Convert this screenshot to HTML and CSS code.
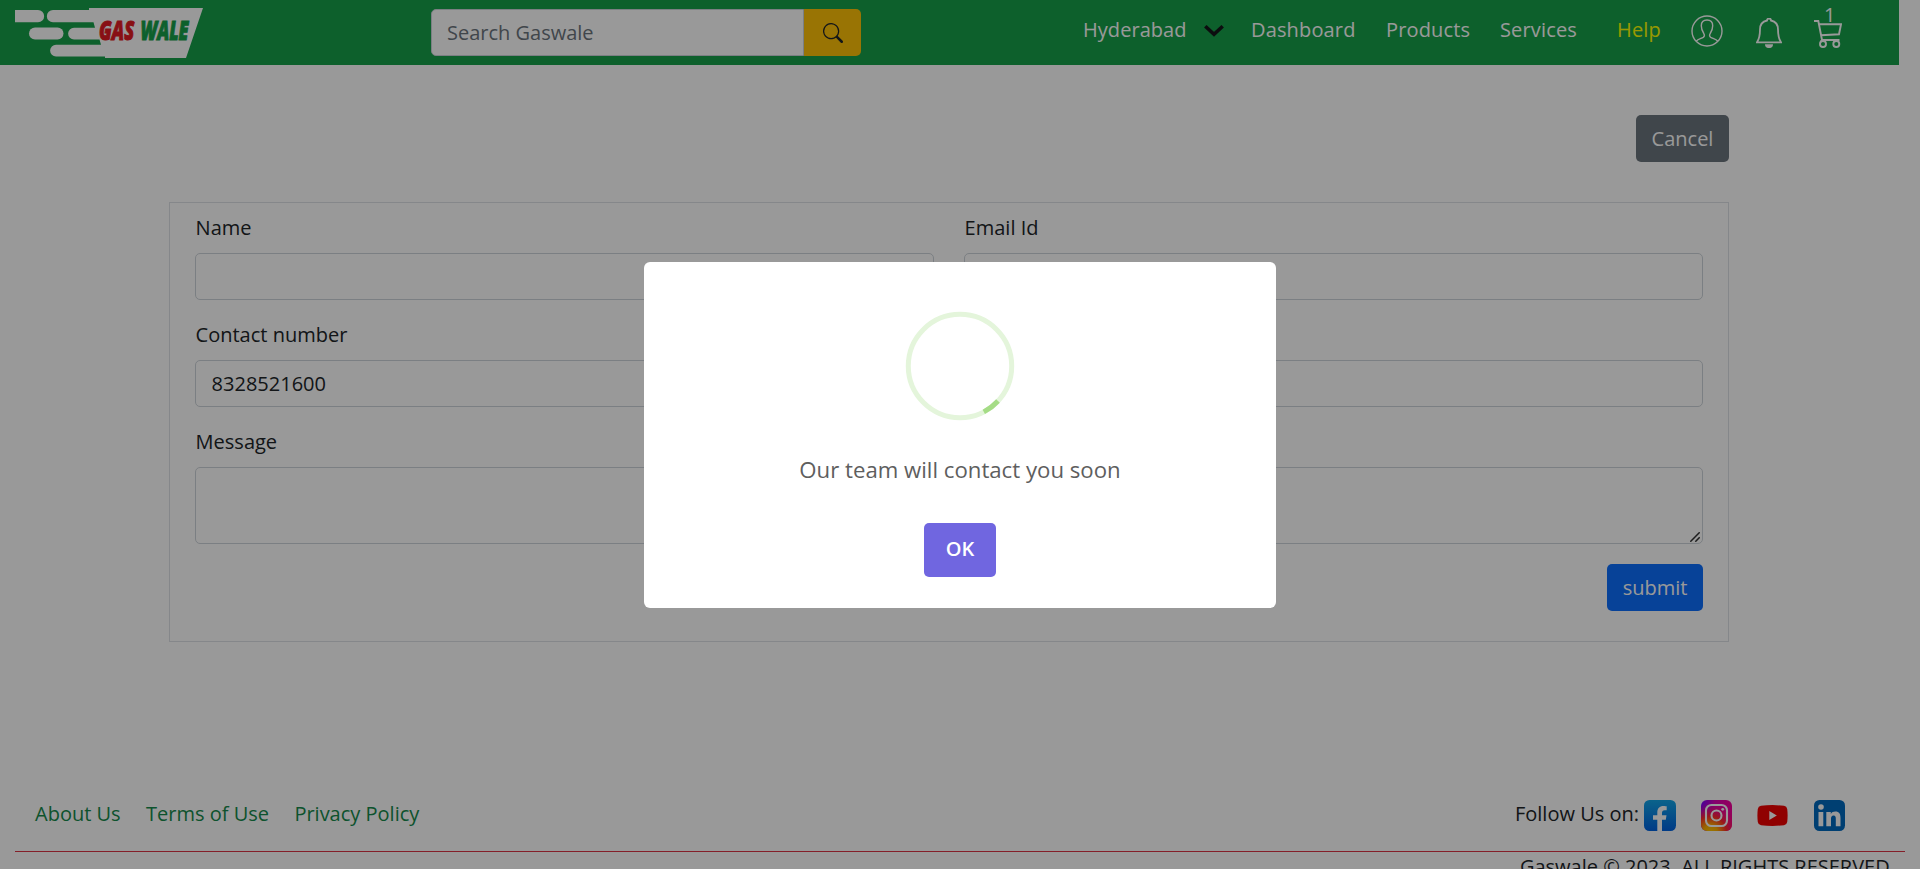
FILE: index.html
```html
<!DOCTYPE html>
<html lang="en">
<head>
<meta charset="utf-8">
<title>Gaswale</title>
<link rel="stylesheet" href="styles.css">
</head>
<body>
<header class="navbar">
  <a class="brand" href="#">
    <svg width="188" height="50" viewBox="0 0 188 50">
      <g fill="#fff">
        <path d="M0 2H23A6 6 0 0 1 23 14.3H0Z"/>
        <path d="M74 0H188L171 50H90V48.5H41A5.8 5.8 0 0 1 41 36.7H86L84.500 31.500H59A5.800 5.800 0 0 1 59 19.700H80L78.500 14.300H38A6 6 0 0 1 38 2H74Z"/>
        <rect x="14" y="19.500" width="34.500" height="12" rx="6"/>
      </g>
      <g class="brand-text">
        <text class="brand-gas" transform="translate(84 32) scale(.68 1)">GAS</text>
        <text class="brand-wale" transform="translate(125.500 32) scale(.66 1)">WALE</text>
      </g>
    </svg>
  </a>
  <form class="search">
    <input class="search-input" type="text" placeholder="Search Gaswale">
    <button class="search-btn" type="button">
      <svg width="20" height="20" viewBox="0 0 16 16" fill="#212529"><path d="M11.742 10.344a6.500 6.500 0 1 0-1.397 1.398h-.001c.03.04.062.078.098.115l3.850 3.850a1 1 0 0 0 1.415-1.414l-3.850-3.850a1.007 1.007 0 0 0-.115-.1zM12 6.500a5.500 5.500 0 1 1-11 0 5.500 5.500 0 0 1 11 0z"/></svg>
    </button>
  </form>
  <nav class="nav">
    <span class="city">Hyderabad</span>
    <svg class="chevron" width="20" height="12" viewBox="0 0 20 12" fill="none" stroke="#14171a" stroke-width="3.600"><path d="M1.300 1.300L10 9.300L18.700 1.300"/></svg>
    <a class="nav-dashboard">Dashboard</a>
    <a class="nav-products">Products</a>
    <a class="nav-services">Services</a>
    <a class="nav-help">Help</a>
    <svg class="icon-user" width="32" height="32" viewBox="0 0 32 32" fill="none" stroke="#fff" stroke-width="1.400"><circle cx="16" cy="16" r="15"/><path d="M5.200 26.200C7 24.200 10 23.600 12.200 22.400C13.700 21.500 13.700 20 12.800 18.500C11.300 16.300 10.300 13.500 10.300 10.800C10.300 7 12.600 5 16 5S21.700 7 21.700 10.800C21.700 13.500 20.700 16.300 19.200 18.500C18.300 20 18.300 21.500 19.800 22.400C22 23.600 25 24.200 26.800 26.200"/></svg>
    <svg class="icon-bell" width="26" height="30" viewBox="0 0 26 30"><path d="M11 2.500C11 -.2 15 -.2 15 2.500C19.500 3.500 22 7 22 11.500C22 18 22.500 20.500 25 24.300H1C3.500 20.500 4 18 4 11.500C4 7 6.500 3.500 11 2.500Z" fill="none" stroke="#fff" stroke-width="1.800"/><path d="M9 26.300H17A4 3.800 0 0 1 9 26.300Z" fill="#fff"/></svg>
    <span class="cart">
      <svg width="28" height="28" viewBox="0 0 28 28" fill="none" stroke="#fff" stroke-width="1.900"><path d="M0 1H4.300L8 20H25.500M4.800 4.300H27L25 14.300L7 15.200M8 20L6.500 22"/><circle cx="9" cy="24" r="3"/><circle cx="22.300" cy="24" r="3"/></svg>
      <span class="cart-count">1</span>
    </span>
  </nav>
</header>

<main class="content">
  <div class="actions"><button class="btn btn-cancel">Cancel</button></div>
  <form class="card">
    <div class="row">
      <label class="field"><span>Name</span><input type="text"></label>
      <label class="field"><span>Email Id</span><input type="text"></label>
    </div>
    <div class="row">
      <label class="field"><span>Contact number</span><input type="text" value="8328521600"></label>
      <label class="field"><span>&nbsp;</span><input type="text"></label>
    </div>
    <label class="field message"><span>Message</span><textarea></textarea>
      <svg class="grip" width="10" height="10" viewBox="0 0 10 10" stroke="#333" stroke-width="1.500"><path d="M.3 9.700L9.700.3M5.300 9.700L9.700 5.300"/></svg>
    </label>
    <button class="btn btn-submit" type="button">submit</button>
  </form>
</main>

<footer class="footer">
  <div class="footer-row">
    <div class="links"><a>About Us</a><a>Terms of Use</a><a>Privacy Policy</a></div>
    <div class="social">
      <span class="follow">Follow Us on:</span>
      <svg class="fb" width="32" height="31" viewBox="0 0 32 31"><defs><linearGradient id="fb" x2="0" y2="1"><stop offset="0" stop-color="#12a5e8"/><stop offset="1" stop-color="#0062e0"/></linearGradient></defs><rect width="32" height="31" rx="5.500" fill="url(#fb)"/><path d="M13.300 31V19.800H9V15.300H13.300V12.500C13.300 8.300 15.700 6 19.400 6C21 6 22.700 6.300 22.700 6.300V10.300H20.700C18.700 10.300 18 11.500 18 13V15.300H22.500L21.800 19.800H18V31Z" fill="#fff"/></svg>
      <svg class="ig" width="31" height="31" viewBox="0 0 31 31"><defs><linearGradient id="ig1" x1="0" y1="0" x2="1" y2="0"><stop offset="0" stop-color="#7a00ff"/><stop offset=".45" stop-color="#dc00b4"/><stop offset="1" stop-color="#f5009b"/></linearGradient><radialGradient id="ig2" cx=".3" cy="1.050" r=".95"><stop offset="0" stop-color="#ffc800"/><stop offset=".25" stop-color="#ffae00"/><stop offset=".55" stop-color="#ff2a28"/><stop offset="1" stop-color="#ff0080" stop-opacity="0"/></radialGradient></defs><rect width="31" height="31" rx="6" fill="url(#ig1)"/><rect width="31" height="31" rx="6" fill="url(#ig2)"/><g fill="none" stroke="#fff" stroke-width="2.100"><rect x="5" y="5" width="21" height="21" rx="5.500"/><circle cx="15.500" cy="15.500" r="5"/></g><circle cx="21.700" cy="9.300" r="1.400" fill="#fff"/></svg>
      <svg class="yt" width="31" height="21" viewBox="0 0 31 21"><path d="M4 .8Q15.500-.6 27 .8Q29.800 1.200 30.200 4Q31 10.500 30.200 17Q29.800 19.800 27 20.200Q15.500 21.600 4 20.200Q1.200 19.800.8 17Q0 10.500.8 4Q1.200 1.200 4 .8Z" fill="#f00000"/><path d="M12.300 6V15L19.800 10.500Z" fill="#fff"/></svg>
      <svg class="in" width="31" height="31" viewBox="0 0 31 31"><rect width="31" height="31" rx="5.500" fill="#0069bf"/><g fill="#fff"><circle cx="7" cy="7" r="2.800"/><path d="M4.500 12H9.300V26.300H4.500ZM12.300 12H16.800V14C17.800 12.400 19.300 11.600 21.300 11.600C25.300 11.600 26.500 14 26.500 18V26.300H21.800V18.700C21.800 16.900 21.400 15.600 19.600 15.600C17.700 15.600 17 17 17 18.700V26.300H12.300Z"/></g></svg>
    </div>
  </div>
  <div class="copyright">Gaswale © 2023. ALL RIGHTS RESERVED.</div>
</footer>

<div class="overlay">
  <div class="modal">
    <svg width="110" height="110" viewBox="0 0 110 110" fill="none" stroke-width="5"><circle cx="55" cy="55" r="51.700" stroke="#e4f5db"/><path d="M93 90A51.700 51.700 0 0 1 78.800 100.900" stroke="#a5dc86"/></svg>
    <p class="modal-text">Our team will contact you soon</p>
    <button class="modal-ok">OK</button>
  </div>
</div>
</body>
</html>
```

FILE: styles.css
```css
* { box-sizing: border-box; }
body {
  margin: 0;
  height: 869px;
  overflow: hidden;
  background: #fff;
  color: #212529;
  font: 20px/30px "Open Sans", "Noto Sans", sans-serif;
}
input, textarea, button { font: inherit; color: inherit; margin: 0; }
svg { display: block; flex: none; }

.navbar {
  display: flex;
  align-items: flex-start;
  width: 1899px;
  height: 65px;
  background: #17a04a;
}
.brand { margin: 8px 0 0 15px; }
.brand-text { font: italic 800 27px "Open Sans", sans-serif; stroke-width: 1; }
.brand-gas { fill: #e31b23; stroke: #e31b23; }
.brand-wale { fill: #17a04a; stroke: #17a04a; }
.search { display: flex; width: 430px; height: 47px; margin: 9px 0 0 228px; }
.search-input {
  width: 373px;
  padding: 7px 15px;
  border: 1px solid #ced4da;
  border-radius: 5px 0 0 5px;
  background: #fff;
}
.search-input::placeholder { color: #6c757d; opacity: 1; }
.search-btn {
  display: flex;
  align-items: center;
  justify-content: center;
  width: 57px;
  padding: 0;
  border: 0;
  border-radius: 0 5px 5px 0;
  background: #ffc107;
}
.nav { display: flex; margin-left: 222px; padding-top: 15px; color: #fff; font-weight: 500; letter-spacing: .15px; white-space: nowrap; }
.city { width: 121px; font-weight: 400; letter-spacing: .05px; }
.chevron { margin: 10px 27px 0 0; }
.nav-dashboard { width: 135px; }
.nav-products { width: 114px; }
.nav-services { width: 117px; }
.nav-help { width: 74px; color: #ff0; }
.icon-bell { margin: 3px 0 0 33px; }
.cart { position: relative; margin: 5px 0 0 32px; }
.cart-count { position: absolute; left: 10px; top: -20px; font-weight: 400; }

.content { width: 1560px; margin: 50px 0 0 169px; }
.actions { display: flex; justify-content: flex-end; }
.btn { height: 47px; padding: 0; border: 0; border-radius: 5px; color: #fff; }
.btn-cancel { width: 93px; background: #6c757d; }
.card {
  display: flex;
  flex-direction: column;
  gap: 20px;
  height: 440px;
  margin-top: 40px;
  padding: 10px 25px;
  border: 1px solid #dee2e6;
}
.row { display: grid; grid-template-columns: 1fr 1fr; gap: 30px; }
.field { display: flex; flex-direction: column; gap: 10px; }
.field span { padding-left: .6px; }
.field input, .field textarea {
  width: 100%;
  height: 47px;
  padding: 7px 15.6px;
  border: 1px solid #ced4da;
  border-radius: 5px;
  background: #fff;
}
.field textarea { height: 77px; resize: none; }
.message { position: relative; }
.grip { position: absolute; right: 3px; bottom: 2px; }
.btn-submit { align-self: flex-end; width: 96px; background: #0d6efd; }

.footer { margin: 151px 15px 0; }
.footer-row { display: flex; justify-content: space-between; height: 59px; padding: 6px 60px 0 20px; border-bottom: 1px solid #dc3545; }
.links { display: flex; gap: 25.4px; color: #168a4c; }
.social { display: flex; }
.fb { margin: 1px 0 0 5px; }
.ig { margin: 1px 0 0 25px; }
.yt { margin: 6px 0 0 25px; }
.in { margin: 1px 0 0 26px; }
.copyright { padding-right: 10px; text-align: right; }

.overlay {
  position: fixed;
  inset: 0;
  display: flex;
  align-items: center;
  justify-content: center;
  background: rgba(0, 0, 0, .4);
}
.modal {
  display: flex;
  flex-direction: column;
  align-items: center;
  width: 632px;
  height: 346px;
  padding-top: 49px;
  border-radius: 6px;
  background: #fff;
}
.modal-text { margin: 32px 0 0; color: #5e5e5e; font-size: 22.2px; line-height: 34px; }
.modal-ok {
  width: 72px;
  height: 54px;
  margin-top: 36px;
  padding: 0 0 1px;
  border: 0;
  border-radius: 5px;
  background: #7066e0;
  color: #fff;
  font-weight: 600;
}
```
